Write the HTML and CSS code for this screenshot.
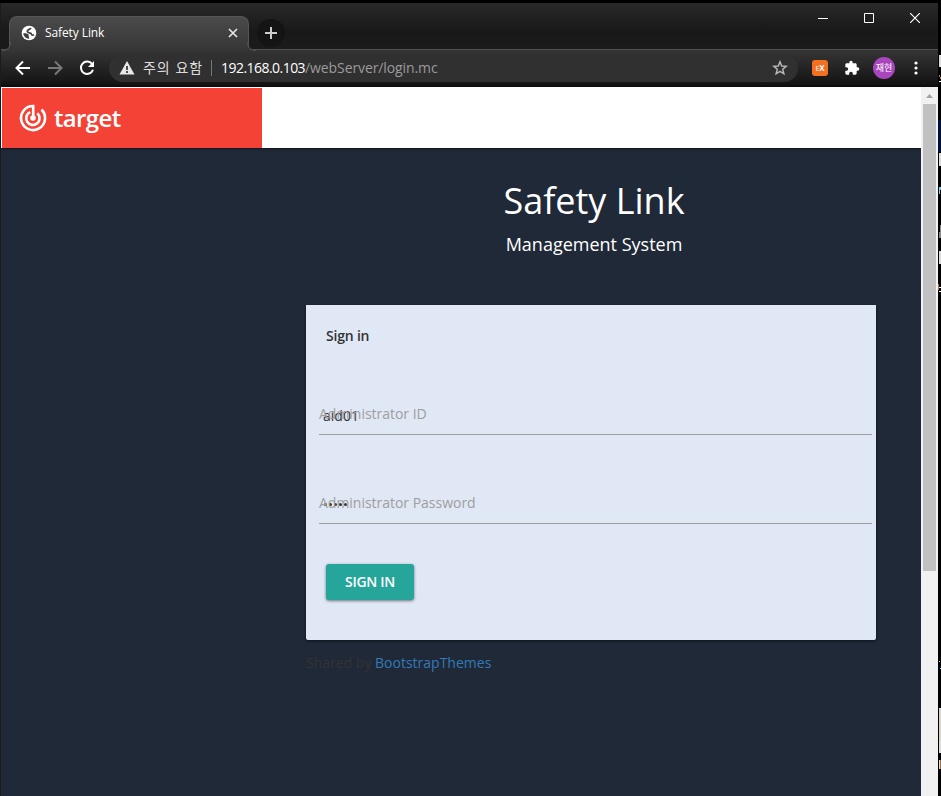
FILE: index.html
```html
<!DOCTYPE html>
<html lang="ko">
<head>
<meta charset="utf-8">
<title>Safety Link</title>
<link rel="stylesheet" href="styles.css">
</head>
<body>
<div class="window">
  <header class="tabstrip">
    <div class="tab">
      <svg class="globe" width="16" height="16" viewBox="0 0 16 16"><circle cx="8" cy="8" r="7.300" fill="#fff"/><path d="M9.800 2.800C9.600 4.600 6.300 4.200 6.200 6.300C6.300 8.300 10.300 7.300 10.600 9.300C10.700 10.700 12.200 10.300 13 9.600" fill="none" stroke="#404040" stroke-width="1.700"/><path d="M2.200 8.200 5.200 8.300C6.500 9 7.800 9.200 7.800 10.300C7 11.300 8.600 12.200 8.300 13.600A5.500 5.500 0 0 1 2.200 8.200z" fill="#404040"/></svg>
      <span class="tab-title">Safety Link</span>
      <svg class="tab-close" width="10" height="10" viewBox="0 0 10 10"><path d="M1 1 9 9M9 1 1 9" stroke="#e5e5e5" stroke-width="1.700"/></svg>
    </div>
    <div class="newtab"><svg width="12" height="12" viewBox="0 0 12 12"><path d="M6 0V12M0 6H12" stroke="#ccc" stroke-width="2"/></svg></div>
    <div class="controls">
      <svg width="10" height="10"><path d="M0 5.500H10" stroke="#fff"/></svg>
      <svg width="10" height="10"><path d="M.5.5H9.500V9.500H.5z" fill="none" stroke="#fff"/></svg>
      <svg width="10" height="10"><path d="M0 0 10 10M10 0 0 10" stroke="#fff" stroke-width="1.200"/></svg>
    </div>
  </header>
  <div class="toolbar">
    <svg class="back" width="16" height="16" viewBox="0 0 16 16"><path d="M15 8H2M8 1.500 1.500 8 8 14.500" fill="none" stroke="#fff" stroke-width="2"/></svg>
    <svg class="forward" width="16" height="16" viewBox="0 0 16 16"><path d="M1 8H14M8 1.500 14.500 8 8 14.500" fill="none" stroke="#797979" stroke-width="2"/></svg>
    <svg class="reload" width="16" height="16" viewBox="0 0 16 16"><path d="M13.100 4A6.200 6.200 0 1 0 14 9.700" fill="none" stroke="#fff" stroke-width="2"/><path d="M15 1V7H9z" fill="#fff"/></svg>
    <div class="omnibox">
      <svg class="warn" width="16" height="14" viewBox="0 0 16 14"><path d="M8 0 15.500 13.500H.5z" fill="#e8e8e8"/><path d="M8 5V9M8 10V12" stroke="#303030" stroke-width="1.700"/></svg>
      <span class="notice">주의 요함</span>
      <span class="divider"></span>
      <span class="url"><b>192.168.0.103</b>/webServer/login.mc</span>
      <svg class="star" width="16" height="16" viewBox="0 0 16 16"><path d="M8 1.800 9.700 6 14.200 6.300 10.700 9.200 11.900 13.800 8 11.300 4.100 13.800 5.300 9.200 1.800 6.300 6.300 6z" fill="none" stroke="#bababa" stroke-width="1.400"/></svg>
    </div>
    <span class="extension"><small>E</small>X</span>
    <svg class="puzzle" width="16" height="16" viewBox="0 0 24 24"><path fill="#fff" d="M20.500 11H19V7c0-1.100-.9-2-2-2h-4V3.500a2.500 2.500 0 0 0-5 0V5H4c-1.100 0-2 .9-2 2v3.800h1.500c1.500 0 2.700 1.200 2.700 2.700S5 16.200 3.500 16.200H2V20c0 1.100.9 2 2 2h3.800v-1.500c0-1.500 1.200-2.700 2.700-2.700s2.700 1.200 2.700 2.700V22H17c1.100 0 2-.9 2-2v-4h1.500a2.500 2.500 0 0 0 0-5z"/></svg>
    <span class="avatar">재현</span>
    <svg class="more" width="4" height="14"><g fill="#fff"><circle cx="2" cy="2" r="1.600"/><circle cx="2" cy="7" r="1.600"/><circle cx="2" cy="12" r="1.600"/></g></svg>
  </div>
  <div class="viewport">
    <main class="page">
      <nav class="navbar">
        <a class="brand">
          <svg width="28" height="28" viewBox="0 0 28 28"><g fill="none" stroke="#fff" stroke-width="2.600"><path d="M22.500 5.500A12 12 0 1 1 14 2H14.200V14"/><path d="M18.300 9.200A6.700 6.700 0 1 1 11.200 8.100"/></g><circle cx="14" cy="14" r="2.800" fill="#fff"/></svg>
          <span>target</span>
        </a>
      </nav>
      <section class="login">
        <h1>Safety Link</h1>
        <p class="subtitle">Management System</p>
        <form class="card">
          <h2>Sign in</h2>
          <div class="field"><label>Administrator ID</label><span class="value">aid01</span></div>
          <div class="field"><label>Administrator Password</label><span class="value dots"><i></i><i></i><i></i><i></i><i></i></span></div>
          <button type="button">SIGN IN</button>
        </form>
        <p class="shared">Shared by <a>BootstrapThemes</a></p>
      </section>
    </main>
    <div class="scrollbar">
      <svg width="17" height="17"><path d="M5 11 8.500 7 12 11z" fill="#a3a3a3"/></svg>
      <div class="thumb"></div>
    </div>
  </div>
</div>
<svg class="behind" width="3" height="796" shape-rendering="crispEdges"><path d="M0 120H3V152H0z" fill="#00103a"/><path d="M1 55H3V67H1zM1 153H3V166H1zM1 251H3V264H1zM1 708H3V753H1z" fill="#ddd"/><path d="M1 710H3V741H1z" fill="#d8d4c8"/><path d="M1 81H3V82H1zM1 287H3V288H1zM1 291H3V292H1z" fill="#fff"/><path d="M0 74H1V77H2V79H3V77H2V75H1V74z" fill="#c47a38"/><path d="M1 187H3V190H2V194H1z" fill="#80cbe8"/><path d="M2 225H3V238H1V232H2z" fill="#888"/><path d="M1 661H2V662H1zM2 668H3V669H2z" fill="#8be3ff"/><path d="M0 284H1V290H0zM2 760H3V769H2z" fill="#b66a29"/><path d="M1 760H2V769H1z" fill="#b9e5ff"/></svg>
</body>
</html>
```

FILE: styles.css
```css
* { box-sizing: border-box; }
body { margin: 0; width: 941px; height: 796px; overflow: hidden; background: #000; display: flex; font-family: "Open Sans", "Noto Sans CJK KR", sans-serif; }
svg { display: block; flex: none; }
h1, h2, p { margin: 0; }
.window { width: 938px; margin-top: 3px; padding-left: 1px; background: #1b1b1b; display: flex; flex-direction: column; }
.tabstrip { height: 47px; display: flex; padding: 13px 0 0 8px; background: linear-gradient(#292929, #191919 60%, #1b1b1b); border-bottom: 1px solid #505050; }
.tab { position: relative; width: 240px; height: 35px; margin-bottom: -1px; border: 1px solid #555; border-bottom: 0; border-radius: 8px 8px 0 0; background: linear-gradient(#4b4b4b, #353535); display: flex; align-items: center; padding: 0 10px 2px 11px; }
.tab::before, .tab::after { content: ""; position: absolute; bottom: 0; width: 8px; height: 8px; }
.tab::before { left: -8px; border-bottom: 1px solid #505050; border-right: 1px solid #505050; border-radius: 0 0 8px 0; box-shadow: 3px 3px 0 -1px #353535; clip-path: inset(0 -1px 0 0); }
.tab::after { right: -8px; border-bottom: 1px solid #505050; border-left: 1px solid #505050; border-radius: 0 0 0 8px; box-shadow: -3px 3px 0 -1px #353535; clip-path: inset(0 0 0 -1px); }
.tab-title { margin: -1px 0 0 8px; font-size: 12px; color: #fff; letter-spacing: -.1px; }
.tab-close { margin-left: auto; }
.newtab { width: 28px; height: 28px; margin: 3px 0 0 8px; border-radius: 50%; background: #141414; display: grid; place-items: center; }
.controls { display: flex; gap: 36px; height: 10px; margin: -3px 18px 0 auto; }
.toolbar { height: 37px; flex: none; display: flex; align-items: center; padding: 0 0 1px 14px; background: linear-gradient(#353535, #141414 92%, #0b0b0b); }
.forward { margin-left: 16px; }
.reload { margin-left: 16px; }
.omnibox { width: 689px; height: 28px; margin-left: 14px; padding: 0 10px 0 10px; border-radius: 14px; background: #303030; display: flex; align-items: center; color: #e8e8e8; font-size: 14px; }
.notice { margin: -2px 0 0 8px; font-family: "Noto Sans CJK KR", sans-serif; font-size: 14px; line-height: 20px; width: 61px; white-space: nowrap; letter-spacing: .95px; color: #ddd; }
.divider { width: 1px; height: 16px; margin: 0 9px 0 7px; background: #777; }
.url { margin-top: -1px; color: #9b9b9b; white-space: nowrap; letter-spacing: -.1px; }
.url b { font-weight: 400; color: #fff; letter-spacing: -.54px; }
.star { margin-left: auto; }
.extension { width: 16px; height: 16px; margin-left: 14px; border-radius: 3px; background: #f37021; color: #fff; font-size: 8px; line-height: 16px; text-align: center; font-weight: 700; }
.extension small { font-size: 7px; font-weight: 400; }
.puzzle { margin-left: 16px; }
.avatar { width: 22px; height: 22px; margin-left: 13px; border-radius: 50%; background: #a946bd; color: #fff; font-family: "Noto Sans CJK KR", sans-serif; font-size: 9px; line-height: 21px; text-align: center; }
.more { margin-left: 19px; }
.viewport { flex: 1; display: flex; }
.page { width: 920px; background: #202938; }
.navbar { height: 61px; padding: 1px 0 0 1px; background: #fff; box-shadow: 0 1px 2px rgba(0,0,0,.5); }
.brand { width: 260px; height: 60px; padding-left: 16.500px; background: #f44336; color: #fff; display: flex; align-items: center; }
.brand span { margin-left: 7.500px; font-size: 24px; line-height: 30px; font-weight: 600; letter-spacing: -.65px; }
.login { width: 570px; margin-left: 305px; padding-top: 29px; }
h1 { padding-left: 6px; font-size: 36px; line-height: 48px; font-weight: 400; color: #fff; text-align: center; }
.subtitle { padding-left: 6px; margin-top: 6px; font-size: 18px; line-height: 26px; color: #fff; text-align: center; }
.card { height: 335px; margin-top: 48px; padding: 20px 4px 0 13px; border-radius: 0 0 2px 2px; background: #e0e7f5; box-shadow: 0 1px 3px rgba(0,0,0,.6); }
h2 { margin-left: 7px; font-size: 14px; line-height: 22px; font-weight: 600; color: #333; letter-spacing: -.2px; }
.field { display: grid; height: 44px; margin-top: 44px; border-bottom: 1px solid #9e9e9e; font-size: 14px; line-height: 20px; }
.field + .field { margin-top: 45px; }
.field label, .field .value { grid-area: 1 / 1; }
.field label { z-index: 1; padding-top: 13px; color: #9e9e9e; letter-spacing: -.02px; }
.value { padding: 15px 0 0 4px; color: #333; }
.dots { display: flex; gap: 2px; padding: 23px 0 0 5px; }
.dots i { width: 3px; height: 3px; border-radius: 50%; background: #333; }
button { display: block; width: 88px; height: 36px; margin: 40px 0 0 7px; padding: 0 0 2px; border: 0; border-radius: 3px; background: #26a69a; box-shadow: 0 1px 3px rgba(0,0,0,.5); color: #fff; font: 600 14px "Open Sans", sans-serif; letter-spacing: -.3px; }
.shared { margin-top: 12px; font-size: 14px; line-height: 22px; color: #333; }
.shared a { color: #337ab7; }
.scrollbar { width: 17px; background: #f1f1f1; }
.thumb { width: 13px; height: 467px; margin-left: 2px; background: #c1c1c1; }
```
